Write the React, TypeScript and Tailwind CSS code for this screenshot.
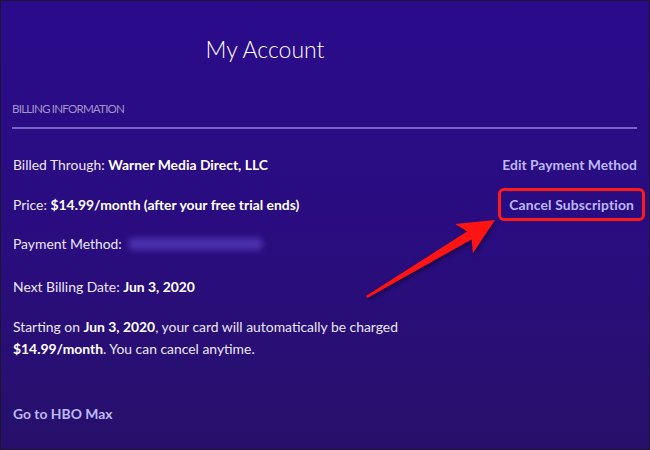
import React from "react";

const rows = [
  { label: "Billed Through:", value: "Warner Media Direct, LLC" },
];

export default function App() {
  return (
    <div
      className="relative w-[650px] h-[450px] overflow-hidden border border-[#1b1530] bg-gradient-to-b from-[#2a0b8b] via-[#2a0c80] to-[#27106b] text-[#ebe7f7]"
      style={{ fontFamily: "Lato, 'Noto Sans', sans-serif" }}
    >
      <div className="flex flex-col px-[12px]">
        <h1 className="mt-[32px] pr-[120px] text-center text-[23px] font-light leading-[32px] text-white">
          My Account
        </h1>

        <div className="mt-[37px] -ml-[1px] text-[11.6px] leading-[14px] tracking-[-0.8px] text-[#a097c9]">
          BILLING INFORMATION
        </div>
        <div className="mt-[11px] -ml-[1px] h-[2px] bg-[#7862c6]" />

        {/* Billing rows */}
        <div className="mt-[26px] flex items-center justify-between text-[13.9px] leading-[20px]">
          <div>
            {rows[0].label}{" "}
            <span className="font-bold text-white">{rows[0].value}</span>
          </div>
          <a className="font-bold text-[#bdb8f7]">Edit Payment Method</a>
        </div>

        <div className="mt-[13px] flex items-center justify-between text-[13.9px] leading-[20px]">
          <div>
            Price:{" "}
            <span className="font-bold text-white">
              $14.99/month (after your free trial ends)
            </span>
          </div>
          <a className="-mr-[8px] rounded-[6px] border-[3px] border-[#ff1a1a] px-[8px] py-[3.5px] tracking-[0.15px] font-bold text-[#bdb8f7]">
            Cancel Subscription
          </a>
        </div>

        <div className="mt-[13px] flex items-center text-[13.9px] leading-[20px]">
          Payment Method:
          <div className="ml-[6px] h-[12px] w-[135px] rounded-full bg-[#5a42c4] opacity-70 blur-[3px]" />
        </div>

        <div className="mt-[23px] text-[13.9px] leading-[20px]">
          Next Billing Date: <span className="font-bold text-white">Jun 3, 2020</span>
        </div>

        <p className="mt-[19px] text-[13.9px] leading-[22px]">
          Starting on <span className="font-bold text-white">Jun 3, 2020</span>, your card
          will automatically be charged
          <br />
          <span className="font-bold text-white">$14.99/month</span>. You can cancel
          anytime.
        </p>

        <a className="mt-[44px] text-[13.9px] leading-[20px] font-bold text-[#bdb8f7]">
          Go to HBO Max
        </a>
      </div>

      {/* annotation arrow */}
      <svg
        className="pointer-events-none absolute left-0 top-0"
        width="650"
        height="450"
        viewBox="0 0 650 450"
      >
        <polygon
          points="365,295 466,230.6 454.3,223 494,219 471.9,252.2 470.6,238.4 366.5,297"
          fill="#ff1414"
          style={{ filter: "drop-shadow(1px 2px 2px rgba(0,0,0,0.45))" }}
        />
      </svg>
    </div>
  );
}
